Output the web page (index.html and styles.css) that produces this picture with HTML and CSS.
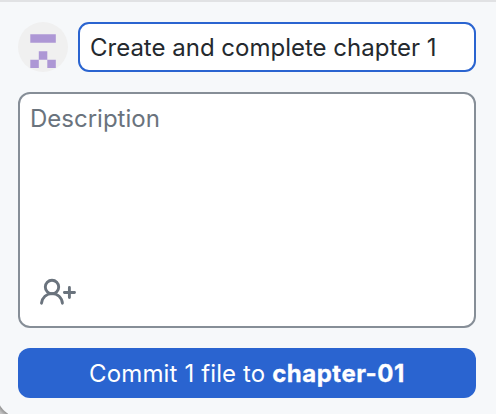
FILE: index.html
```html
<!DOCTYPE html>
<html lang="en">
<head>
<meta charset="utf-8">
<title>Commit</title>
<link rel="stylesheet" href="styles.css">
</head>
<body>
<main class="commit-panel">
  <div class="summary-row">
    <svg class="avatar" viewBox="0 0 50 50" aria-hidden="true">
      <circle cx="25" cy="25" r="25" fill="#f0f0f0"/>
      <path fill="#ad97d5" d="M12.3 12.3h25.5v8.5H12.3zM20.8 29.2h8.5v8.5h-8.5zM12.3 37.7h8.5v8.3h-8.5zM29.3 37.7h8.5v8.3h-8.5z"/>
    </svg>
    <div class="summary"><span class="summary-text">Create and complete chapter 1</span></div>
  </div>
  <div class="description">
    <span class="placeholder">Description</span>
    <svg class="add-author" viewBox="0 0 38 28" aria-hidden="true">
      <g fill="none" stroke="#6a737d" stroke-width="2.9" stroke-linecap="round">
        <circle cx="13" cy="9" r="6.700"/>
        <path d="M2.500 25.200C3.100 19.600 7.500 15.600 13 15.600s9.900 4 10.400 9.600M25.400 14.500h10.100M30.400 9.400v10.100"/>
      </g>
    </svg>
  </div>
  <button class="commit-button"><span class="label">Commit 1 file to <strong>chapter-01</strong></span></button>
  <i class="window-corner"></i>
</main>
</body>
</html>
```
FILE: styles.css
```css
* {
  box-sizing: border-box;
}

body {
  margin: 0;
  background: #f6f8fa;
  font-family: Inter, sans-serif;
  font-size: 24px;
  line-height: 30px;
  color: #24292e;
}

.commit-panel {
  position: relative;
  display: flex;
  flex-direction: column;
  gap: 20px;
  height: 414px;
  padding: 20px 20px 16px 18px;
  border-top: 2px solid #e1e2e4;
  overflow: hidden;
}

.summary-row {
  display: flex;
  gap: 10px;
}

.avatar {
  width: 50px;
  height: 50px;
}

.summary {
  display: flex;
  flex: 1;
  align-items: center;
  height: 50px;
  padding: 2px 0 0 10px;
  border: 2px solid #2a64d0;
  border-radius: 11px;
  background: #fff;
}

.summary-text,
.placeholder,
.label {
  white-space: nowrap;
}

.description {
  display: flex;
  flex-direction: column;
  justify-content: space-between;
  height: 236px;
  padding: 10px 10px 20px;
  border: 2px solid #868e97;
  border-radius: 12px;
  background: #fff;
  color: #6a737d;
}

.add-author {
  width: 38px;
  height: 28px;
  margin-left: 8.5px;
}

.commit-button {
  height: 50px;
  padding: 2px 0 0;
  border: 0;
  border-radius: 12px;
  background: #2a64d0;
  color: #fff;
  font: inherit;
  letter-spacing: 0.13px;
}

.commit-button strong {
  font-weight: 700;
  letter-spacing: 0.5px;
  -webkit-text-stroke: 0.3px #fff;
}

.window-corner {
  position: absolute;
  left: 0;
  bottom: 0;
  width: 8px;
  height: 9px;
  background: radial-gradient(circle at 20px -11px, transparent 22.500px, #999 23.500px, #c4c4c4 27px);
}
```
